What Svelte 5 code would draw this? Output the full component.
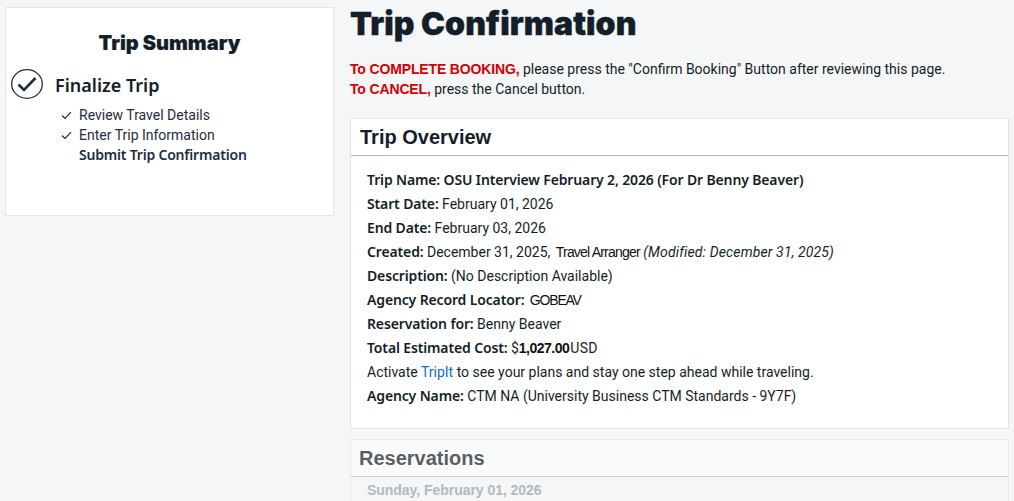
<script>
  const steps = [
    { label: 'Review Travel Details', done: true },
    { label: 'Enter Trip Information', done: true },
    { label: 'Submit Trip Confirmation', done: false }
  ];
</script>

<div class="page">
  <aside class="summary">
    <h2>Trip Summary</h2>
    <div class="stage">
      <svg class="bigcheck" width="32" height="30" viewBox="0 0 32 30">
        <ellipse cx="16" cy="15" rx="15.3" ry="14.3" fill="none" stroke="#1d2d3e" stroke-width="1.3" />
        <path d="M7.5 15.5 L13 21 L24.5 9" fill="none" stroke="#1d2d3e" stroke-width="2.6" />
      </svg>
      <span>Finalize Trip</span>
    </div>
    <ul>
      {#each steps as s}
        <li class:current={!s.done}>
          <span class="tick">
            {#if s.done}
              <svg width="11" height="9" viewBox="0 0 11 9"><path d="M1 4.5 L4 7.5 L10 1.2" fill="none" stroke="#1d2d3e" stroke-width="1.2" /></svg>
            {/if}
          </span>
          {s.label}
        </li>
      {/each}
    </ul>
  </aside>

  <main>
    <h1>Trip Confirmation</h1>
    <p class="note">
      <b>To COMPLETE BOOKING,</b> please press the "Confirm Booking" Button after reviewing this page.<br />
      <b>To CANCEL,</b> press the Cancel button.
    </p>

    <section class="card">
      <h3>Trip Overview</h3>
      <div class="rows">
        <div><strong>Trip Name: OSU Interview February 2, 2026 (For Dr Benny Beaver)</strong></div>
        <div><strong>Start Date:</strong> February 01, 2026</div>
        <div><strong>End Date:</strong> February 03, 2026</div>
        <div><strong>Created:</strong> December 31, 2025, <span class="narrow">Travel Arranger</span> <em>(Modified: December 31, 2025)</em></div>
        <div><strong>Description:</strong> (No Description Available)</div>
        <div><strong>Agency Record Locator:</strong> <span class="code">GOBEAV</span></div>
        <div><strong>Reservation for:</strong> Benny Beaver</div>
        <div><strong>Total Estimated Cost:</strong> $<span class="amt">1,027.00</span><span class="usd">USD</span></div>
        <div>Activate <a href="#tripit">TripIt</a> to see your plans and stay one step ahead while traveling.</div>
        <div><strong>Agency Name:</strong> CTM NA (University Business CTM Standards - 9Y7F)</div>
      </div>
    </section>

    <section class="card faded">
      <h3>Reservations</h3>
      <div class="day">Sunday, February 01, 2026</div>
    </section>
  </main>
</div>

<style>
  :global(body) {
    margin: 0;
    background: #f5f6f7;
    overflow: hidden;
  }
  .page {
    height: 501px;
    overflow: hidden;
    display: flex;
    align-items: flex-start;
    gap: 16px;
    padding: 0 5px;
    font-family: Roboto, "Noto Sans", sans-serif;
    font-size: 14px;
    color: #1d2d3e;
  }
  .summary {
    flex: 0 0 329px;
    box-sizing: border-box;
    height: 209px;
    margin-top: 7px;
    background: #fff;
    border: 1px solid #e5e5e5;
    padding: 0 5px;
  }
  h2 {
    margin: 23px 0 0;
    text-align: center;
    font-family: Inter, sans-serif;
    font-size: 20px;
    font-weight: 900;
    line-height: 24px;
    color: #131e29;
    -webkit-text-stroke: 0.15px #131e29;
  }
  .stage {
    display: flex;
    align-items: center;
    gap: 12px;
    margin-top: 14px;
    font-family: "Noto Sans", sans-serif;
    font-size: 18px;
    font-weight: 600;
    height: 30px;
    color: #131e29;
  }
  .stage span {
    position: relative;
    top: 1px;
  }
  ul {
    list-style: none;
    margin: 6px 0 0;
    padding: 0 0 0 50px;
  }
  li {
    display: flex;
    align-items: center;
    height: 20px;
  }
  li.current {
    font-family: "Noto Sans", sans-serif;
    font-weight: 600;
    letter-spacing: -0.2px;
    margin-top: -1px;
  }
  .tick {
    width: 18px;
    display: flex;
  }
  main {
    flex: 1;
    min-width: 0;
  }
  h1 {
    margin: 5px 0 0;
    font-family: Inter, sans-serif;
    font-size: 32px;
    font-weight: 900;
    line-height: 38px;
    color: #131e29;
    -webkit-text-stroke: 0.4px #131e29;
    letter-spacing: 0.1px;
  }
  .note {
    margin: 16px 0 0;
    line-height: 20px;
    color: #131e29;
  }
  .note b {
    color: #d30000;
    font-family: "Liberation Sans", sans-serif;
    letter-spacing: -0.15px;
  }
  .card {
    background: #fff;
    border: 1px solid #e5e5e5;
    margin-top: 19px;
  }
  h3 {
    margin: 0;
    padding: 0 9px;
    height: 36px;
    line-height: 36px;
    font-family: "Liberation Sans", sans-serif;
    font-size: 20px;
    font-weight: 700;
    color: #131e29;
    border-bottom: 1px solid #b8bcc0;
  }
  .rows {
    padding: 12px 16px 20px;
    line-height: 24px;
    color: #131e29;
  }
  .rows > div {
    height: 24px;
  }
  strong {
    font-family: "Noto Sans", sans-serif;
    font-weight: 600;
    letter-spacing: -0.14px;
  }
  .narrow {
    font-family: "Liberation Sans", sans-serif;
    letter-spacing: -0.8px;
    margin-left: 2px;
    color: #111;
  }
  .code {
    font-family: "Liberation Sans", sans-serif;
    letter-spacing: -1.2px;
    margin-left: 2px;
    color: #111;
  }
  .amt {
    font-family: "Liberation Sans", sans-serif;
    letter-spacing: -0.5px;
    font-weight: 700;
    color: #111;
  }
  .usd {
    margin-left: 1px;
    letter-spacing: 0.3px;
  }
  em {
    letter-spacing: 0.14px;
  }
  a {
    color: #0a6ed1;
    text-decoration: none;
  }
  .faded {
    margin-top: 10px;
    opacity: 0.7;
    background: #fdfdfd;
  }
  .faded h3 { padding: 0 8px; }
  .day {
    background: #f5f6f7;
    padding: 5px 16px;
    font-family: "Liberation Sans", sans-serif;
    font-weight: 700;
    font-size: 14px;
    letter-spacing: -0.04px;
    color: #98a0a8;
    height: 40px;
  }
</style>
